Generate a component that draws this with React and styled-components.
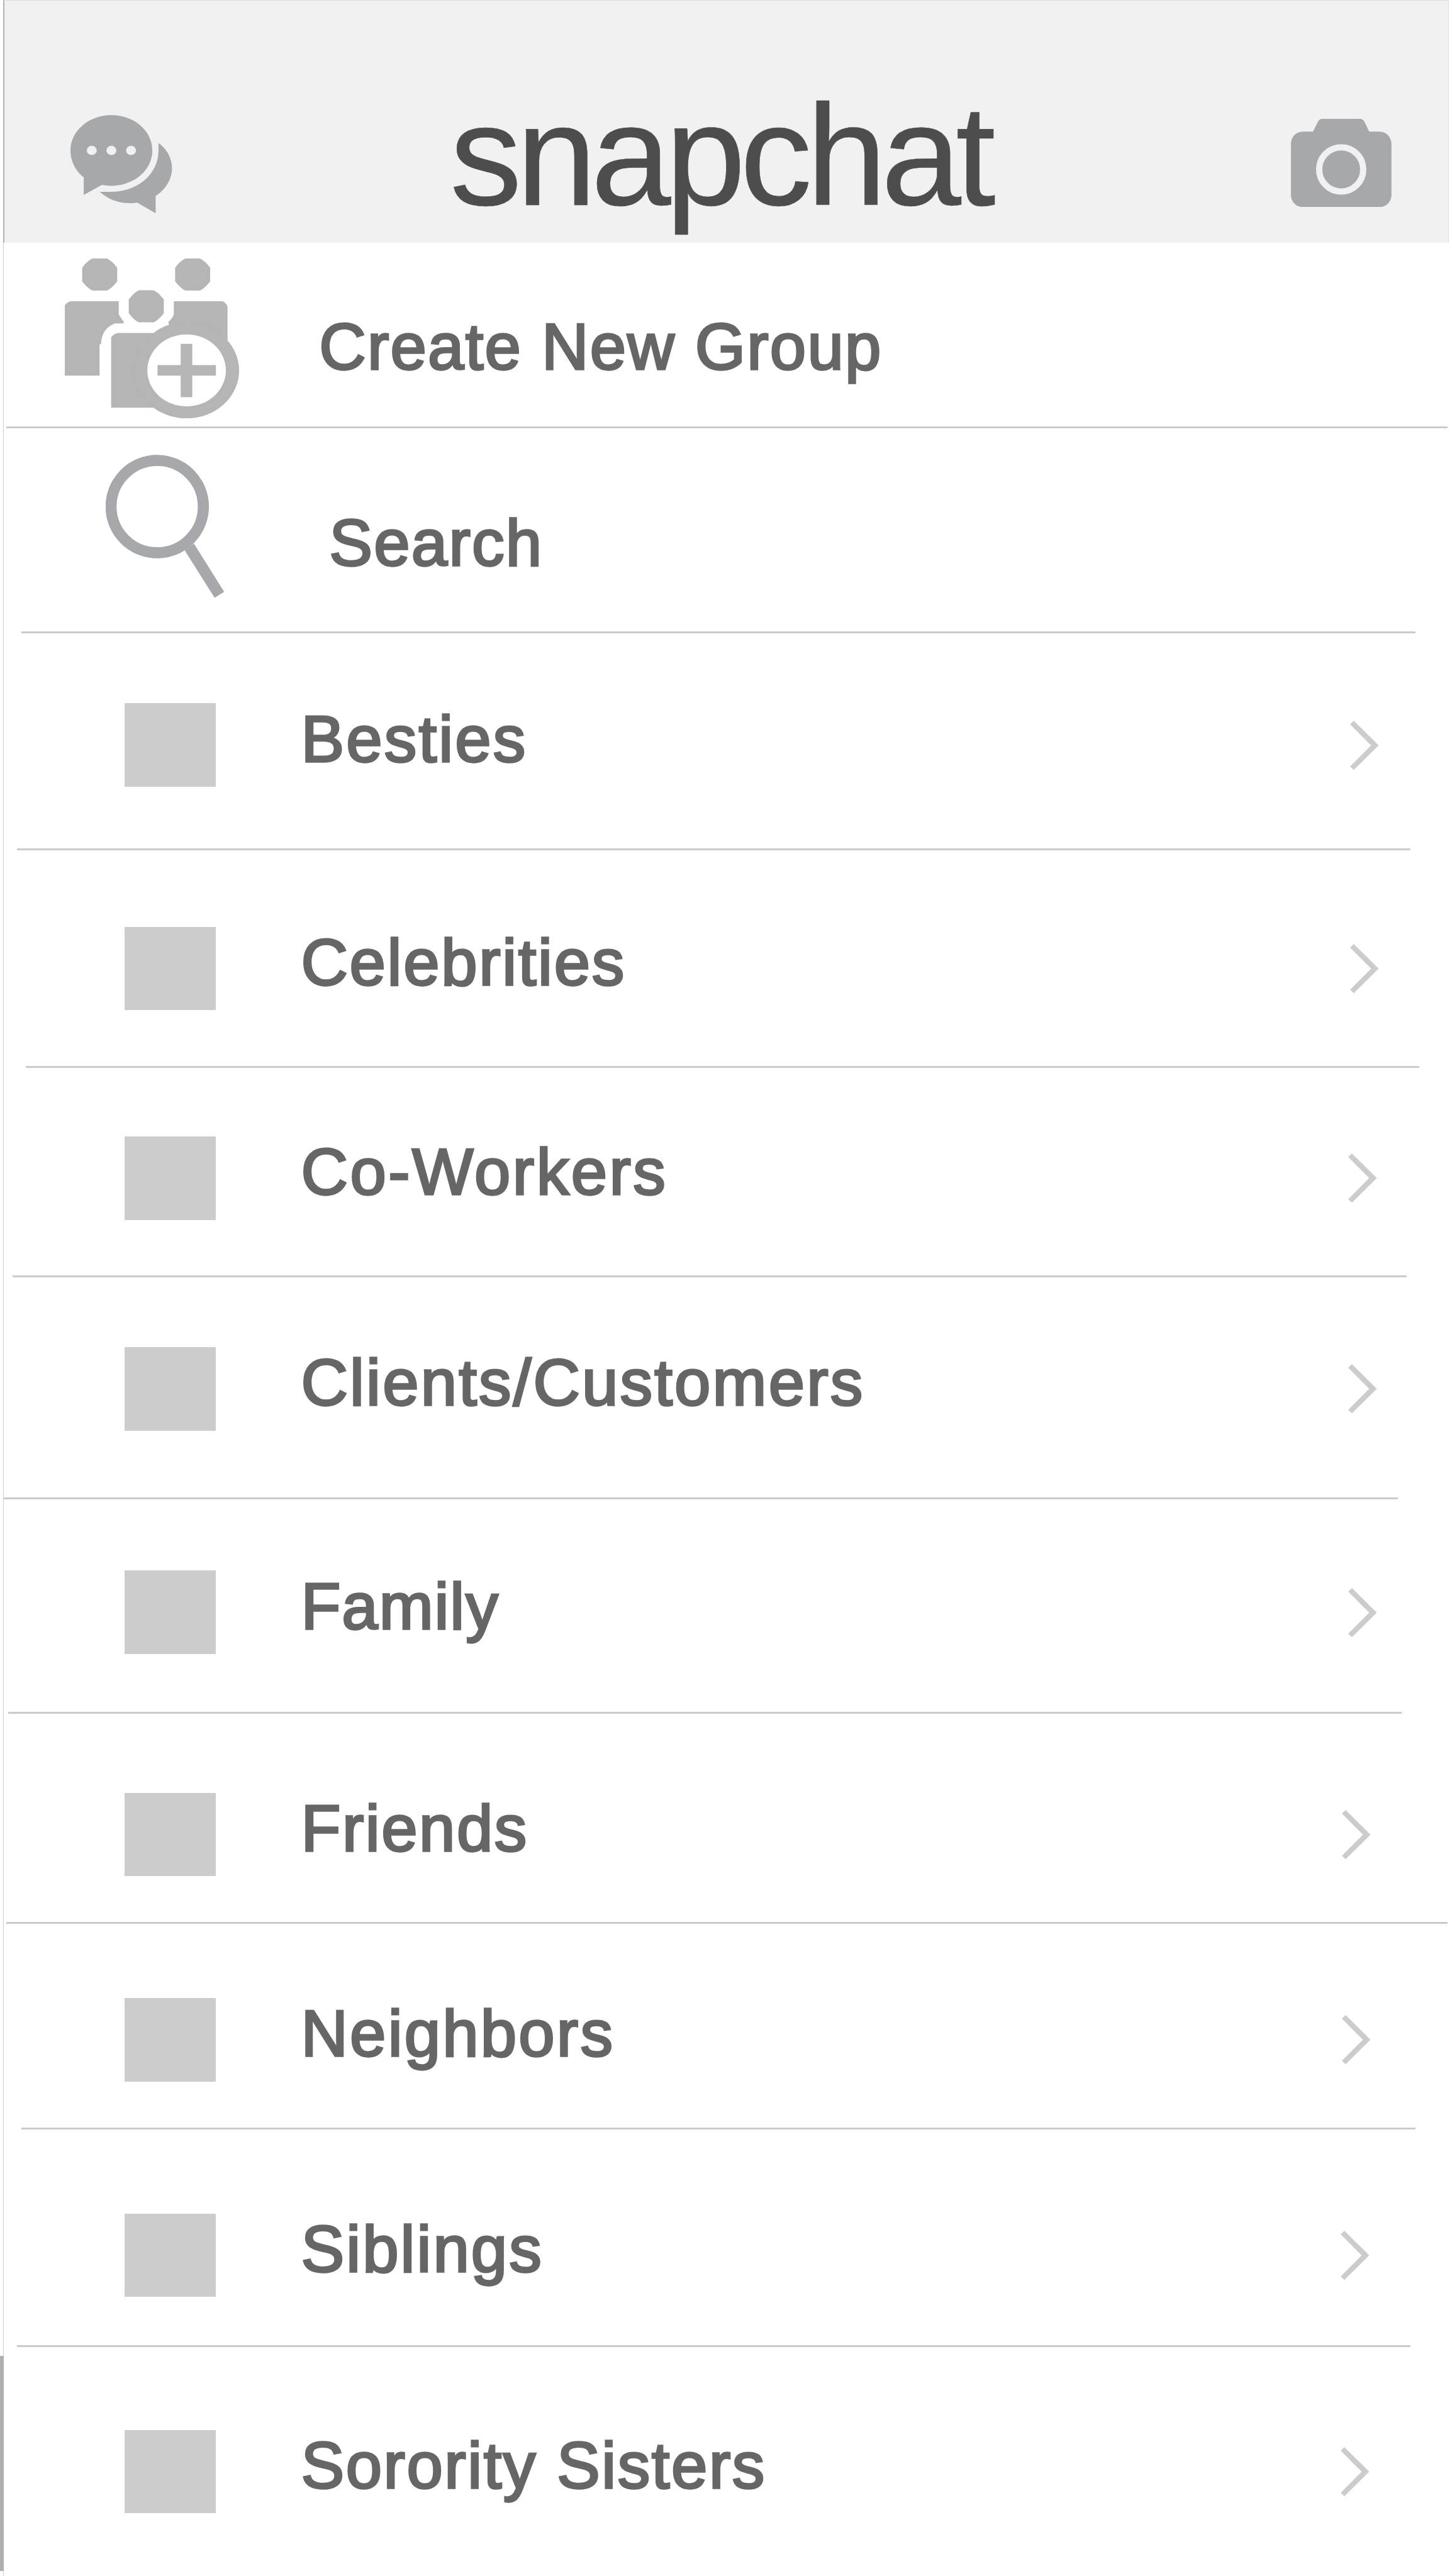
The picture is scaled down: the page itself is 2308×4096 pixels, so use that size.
import React from "react";
import styled, { createGlobalStyle } from "styled-components";

// Measurements are in artboard units; u() converts them to CSS pixels.
const SCALE = 0.73692;
const u = (n) => `${+(n * SCALE).toFixed(3)}px`;

const GlobalStyle = createGlobalStyle`
  body { margin: 0; background: #ffffff; overflow: hidden; }
`;

const Screen = styled.div`
  position: relative;
  box-sizing: border-box;
  width: 2308px;
  height: 4096px;
  padding-left: ${u(7)};
  overflow: hidden;
  background: #ffffff;
  font-family: "Liberation Sans", Arial, sans-serif;
`;

const Header = styled.header`
  display: flex;
  align-items: flex-start;
  box-sizing: border-box;
  width: ${u(3118)};
  height: ${u(524)};
  border-left: 2px solid #b3b3b3;
  border-top: 1px solid #dedede;
  border-right: 1px solid #dedede;
  background: #f1f1f1;
`;

const Title = styled.h1`
  margin: ${u(179)} 0 0 ${u(599)};
  width: ${u(1814)};
  font-size: ${u(311)};
  line-height: ${u(311)};
  font-weight: 400;
  letter-spacing: ${u(-12.1)};
  color: #4d4d4d;
  -webkit-text-stroke: ${u(0.8)} #4d4d4d;
  white-space: nowrap;
`;

const Icon = styled.svg`
  display: block;
  flex: none;
  width: ${(p) => u(p.$w)};
  height: ${(p) => u(p.$h)};
  margin-top: ${(p) => u(p.$top || 0)};
  margin-left: ${(p) => u(p.$left || 0)};
`;

const List = styled.main`
  display: flex;
  flex-direction: column;
  box-sizing: border-box;
  width: ${u(3124)};
  border-left: 1px solid #cccccc;
`;

const Row = styled.div`
  display: flex;
  align-items: flex-start;
  flex: none;
  box-sizing: border-box;
  height: ${(p) => u(p.$height)};
  padding-top: ${(p) => u(p.$top || 0)};
`;

const Divider = styled.div`
  flex: none;
  height: ${u(4.07)};
  margin-left: ${(p) => u(p.$left - 8.36)};
  width: ${(p) => u(p.$right - p.$left)};
  background: #cbcbcb;
`;

const Label = styled.span`
  flex: none;
  width: ${(p) => u(p.$width || 2200)};
  margin-top: ${(p) => u(p.$top || 0)};
  margin-left: ${(p) => u(p.$left)};
  font-size: ${u(140)};
  line-height: ${u(153)};
  letter-spacing: ${(p) => u(p.$tracking)};
  color: #666666;
  -webkit-text-stroke: ${u(4.6)} #666666;
  white-space: nowrap;
`;

const Thumb = styled.div`
  flex: none;
  width: ${u(196.5)};
  height: ${u(179.6)};
  margin-left: ${u(260.4)};
  background: #cccccc;
`;

const EdgeBar = styled.div`
  position: absolute;
  left: 0;
  top: ${u(5083)};
  width: ${u(7.5)};
  height: ${u(465)};
  background: #b0b0b0;
`;

const ChatIcon = () => (
  <Icon $w={219} $h={211.8} $top={246.3} $left={142.6} viewBox="298 422 429 361" preserveAspectRatio="none" fill="#a7a8ac">
    <path d="M471 422C567 422 644 480 644 552C644 624 567 682 471 682Q450 682 431 679L354 716V651C320 628 298 592 298 552C298 480 376 422 471 422Z" />
    <path d="M670 525C705 546 727 580 727 618C727 658 700 696 658 719V783L580 744C515 752 462 735 422 704H471C580 704 670 640 670 552Z" />
    <g fill="#f1f1f1">
      <ellipse cx="388" cy="552" rx="21" ry="17" />
      <ellipse cx="471" cy="552" rx="21" ry="17" />
      <ellipse cx="554" cy="552" rx="21" ry="17" />
    </g>
  </Icon>
);

const CameraIcon = () => (
  <Icon $w={216.8} $h={190.5} $top={254.9} viewBox="546 319 639 571" preserveAspectRatio="none" fill="#a7a8ac">
    <path d="M622 401H686L716 341Q727 319 744 319H986Q1003 319 1015 341L1044 401H1109C1151 401 1185 435 1185 480V812C1185 855 1151 890 1109 890H622C580 890 546 855 546 812V480C546 435 580 401 622 401Z" />
    <ellipse cx="865.5" cy="646" rx="140" ry="143" fill="none" stroke="#f1f1f1" strokeWidth="40" />
  </Icon>
);

const Head = ({ x, y }) => (
  <path d={`M${x - 31} ${y - 59}H${x + 31}Q${x + 53} ${y - 50} ${x + 74} ${y - 25}V${y + 25}Q${x + 53} ${y + 50} ${x + 31} ${y + 59}H${x - 31}Q${x - 53} ${y + 50} ${x - 74} ${y + 25}V${y - 25}Q${x - 53} ${y - 50} ${x - 31} ${y - 59}Z`} />
);

const GroupIcon = () => (
  <Icon $w={376} $h={345} $top={34} $left={131.5} viewBox="274 951 737 588" preserveAspectRatio="none" fill="#b5b5b5">
    <Head x={421.5} y={1010} />
    <Head x={814.5} y={1010} />
    <Head x={618.5} y={1127} />
    <path d="M274 1124Q282 1111 299 1108H502V1157L525 1187L518 1190H487Q430 1207 427 1266H421V1382H274Z" />
    <path d="M735 1108H942Q955 1114 962 1127V1260L900 1360H650V1225Q680 1203 715 1195L711 1185Q730 1170 735 1157Z" />
    <path d="M470 1241Q480 1228 497 1225H700V1500H470Z" />
    <ellipse cx="789" cy="1363" rx="222" ry="176" />
    <ellipse cx="789" cy="1362.5" rx="166" ry="132.5" fill="#ffffff" />
    <path d="M764 1265H813V1343H913V1382H813V1461H764V1382H666V1343H764Z" />
  </Icon>
);

const SearchIcon = () => (
  <Icon $w={256} $h={309} $top={58} $left={220.2} viewBox="228.5 981 256 309">
    <circle cx="339.6" cy="1093" r="99.6" fill="none" stroke="#a7a8ac" strokeWidth="24" />
    <path d="M418.8 1172.7L484 1276.7L463.4 1289.7L399 1187.7Z" fill="#a7a8ac" />
  </Icon>
);

const Chevron = ({ left }) => (
  <Icon $w={61.7} $h={106.3} $top={37} $left={left} viewBox="0 0 61.7 106.2" fill="#cccccc">
    <path d="M8 0L0 7.6L45.3 53.1L0 98.6L8 106.2L61.7 53.1Z" />
  </Icon>
);

// height: row height, top: space above the thumbnail, chevron: its left edge,
// rule: [left, right] ends of the line under the row
const groups = [
  { name: "Besties", tracking: 4.2, height: 464.6, top: 151.1, chevron: 2912, rule: [36, 3043] },
  { name: "Celebrities", tracking: 3.6, height: 465, top: 165, chevron: 2912, rule: [56, 3062] },
  { name: "Co-Workers", tracking: 4.7, height: 448, top: 148, chevron: 2908.2, rule: [27, 3034] },
  { name: "Clients/Customers", tracking: 4.25, height: 474, top: 150.6, chevron: 2908.2, rule: [8.4, 3015] },
  { name: "Family", tracking: 2.6, height: 460, top: 154.4, chevron: 2908.2, rule: [17.5, 3024] },
  { name: "Friends", tracking: 3.4, height: 449, top: 170, chevron: 2894.7, rule: [14, 3123] },
  { name: "Neighbors", tracking: 4.3, height: 439, top: 160, chevron: 2894.7, rule: [46.4, 3053] },
  { name: "Siblings", tracking: 4.1, height: 466, top: 182, chevron: 2891.2, rule: [36, 3043] },
  { name: "Sorority Sisters", tracking: 3.4, height: 494, top: 178.7, chevron: 2891.2, rule: null },
];

export default function App() {
  return (
    <>
      <GlobalStyle />
      <Screen>
        <Header>
          <ChatIcon />
          <Title>snapchat</Title>
          <CameraIcon />
        </Header>
        <List>
          <Row $height={395.6}>
            <GroupIcon />
            <Label $top={149} $left={172.5} $tracking={3}>Create New Group</Label>
          </Row>
          <Divider $left={14} $right={3123} />
          <Row $height={439}>
            <SearchIcon />
            <Label $top={173.5} $left={225.5} $tracking={3}>Search</Label>
          </Row>
          <Divider $left={46.4} $right={3053} />
          {groups.map((g) => (
            <React.Fragment key={g.name}>
              <Row $height={g.height} $top={g.top}>
                <Thumb />
                <Label $top={1.7} $left={184} $tracking={g.tracking}>{g.name}</Label>
                <Chevron left={g.chevron - 2849.2} />
              </Row>
              {g.rule && <Divider $left={g.rule[0]} $right={g.rule[1]} />}
            </React.Fragment>
          ))}
        </List>
        <EdgeBar />
      </Screen>
    </>
  );
}
